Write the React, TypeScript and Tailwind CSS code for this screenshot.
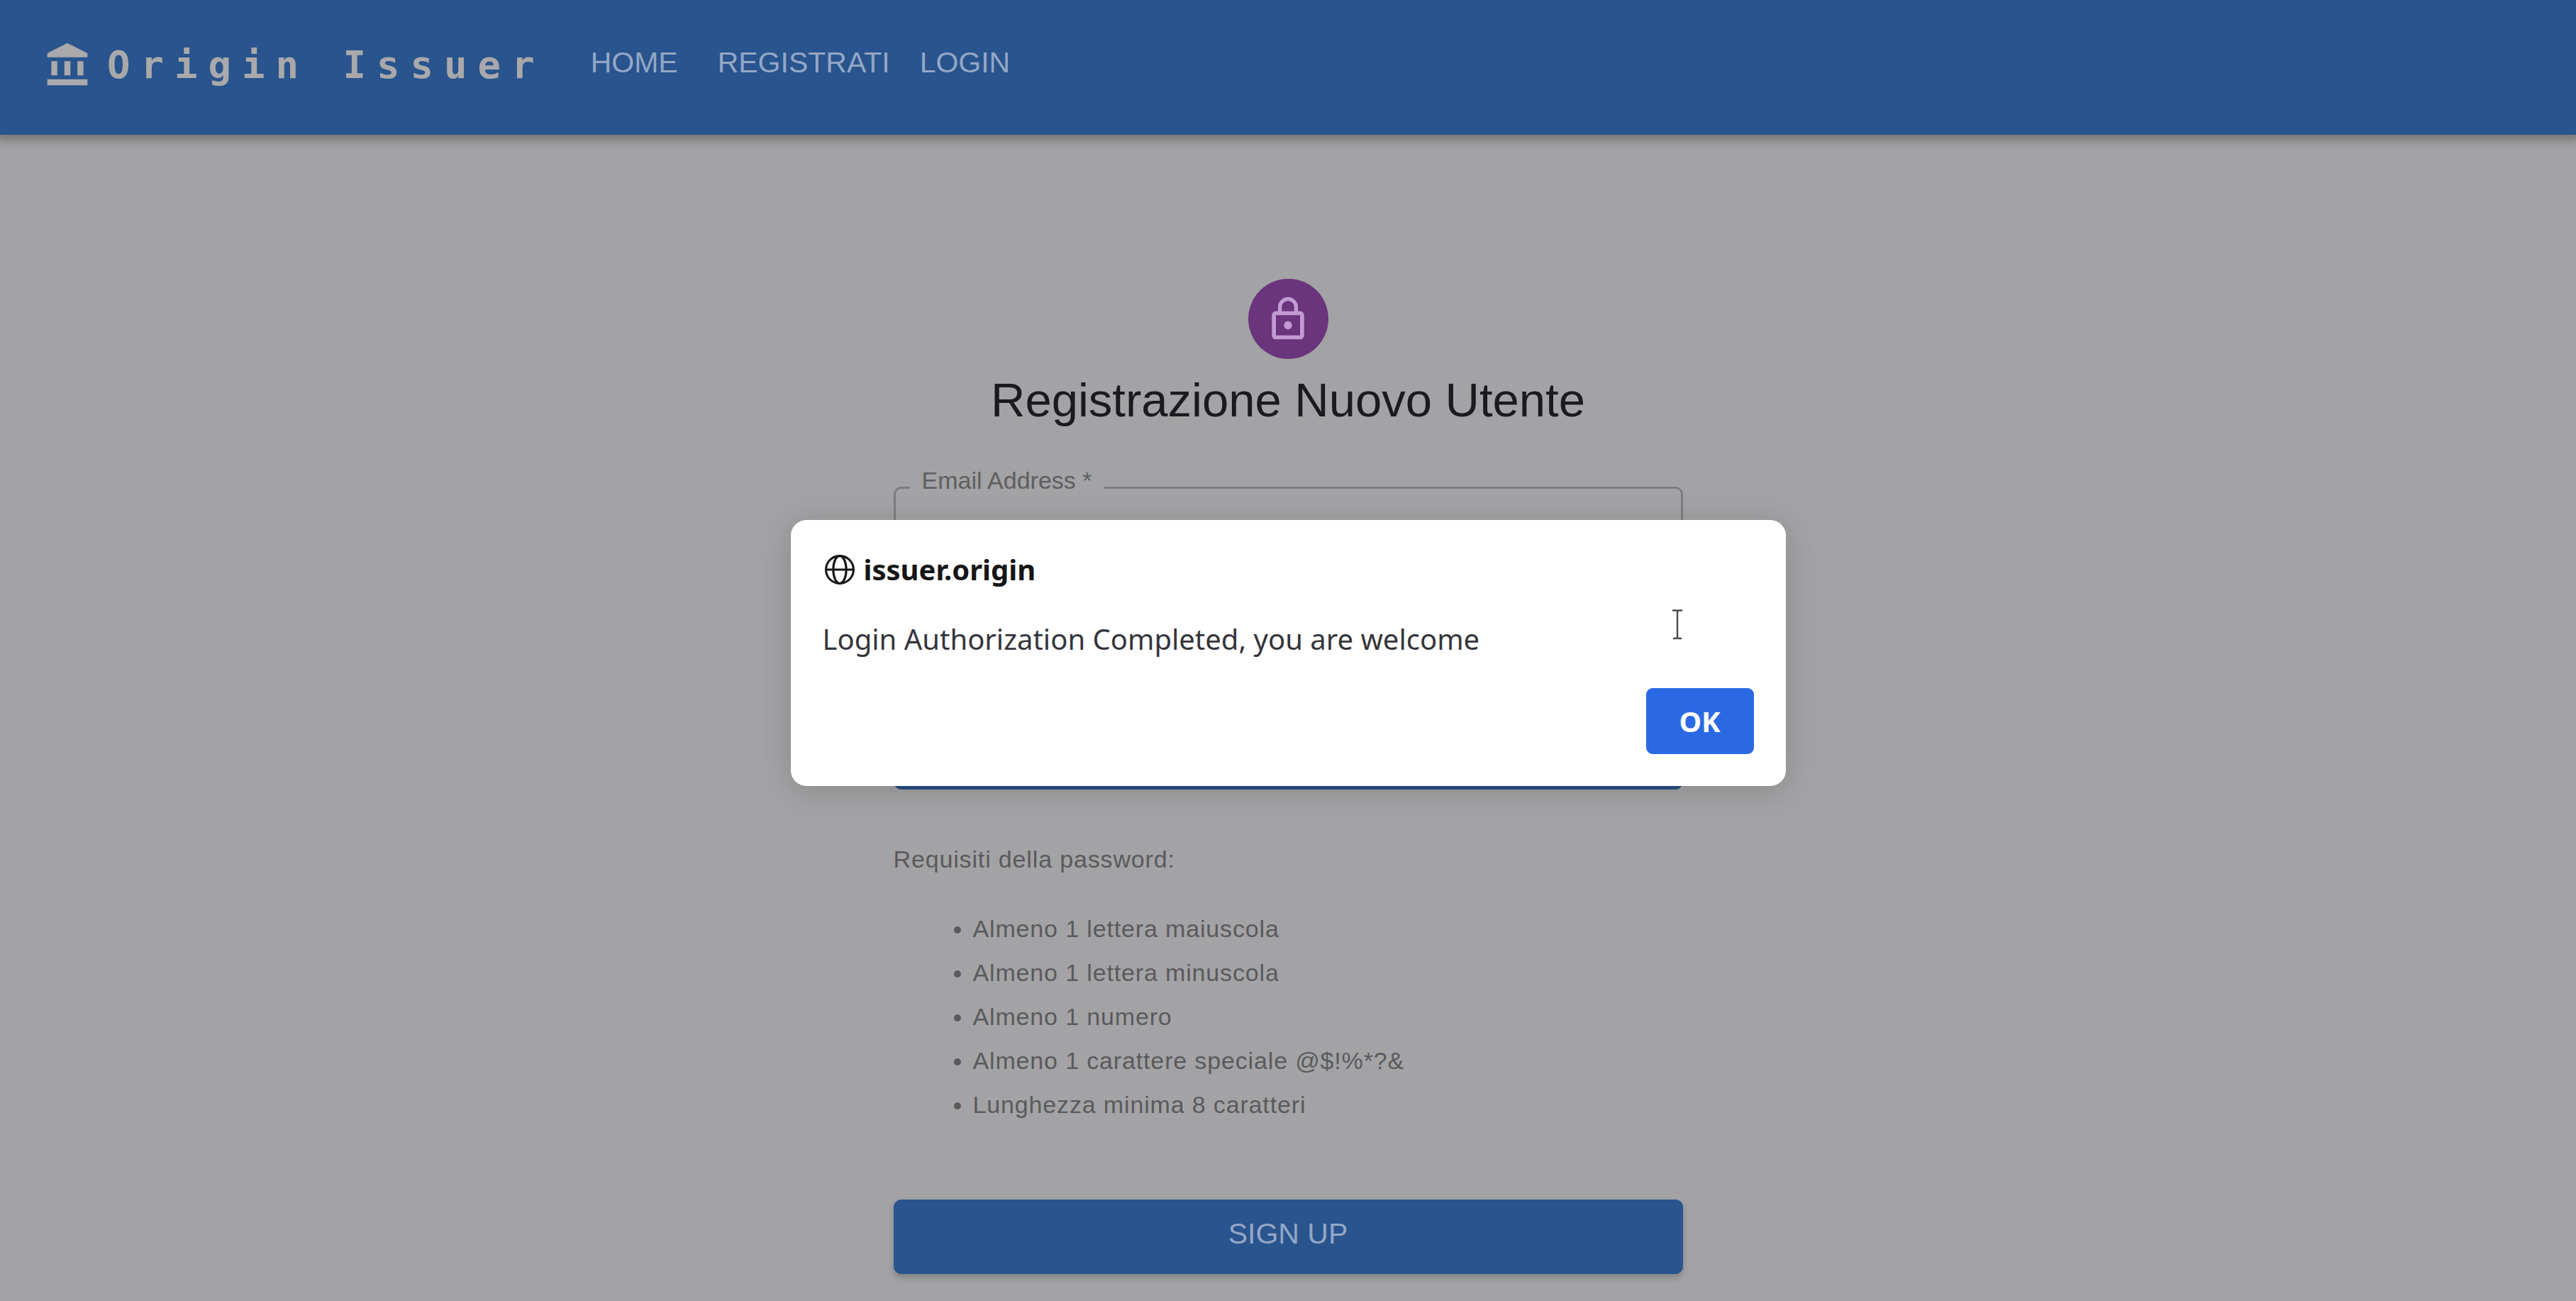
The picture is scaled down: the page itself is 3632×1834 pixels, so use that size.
import React from "react";
import { MdAccountBalance, MdLockOutline } from "react-icons/md";

const navLinks = [
  { label: "HOME", spacing: "mr-14" },
  { label: "REGISTRATI", spacing: "mr-[42px]" },
  { label: "LOGIN", spacing: "" },
];

const passwordRules = [
  "Almeno 1 lettera maiuscola",
  "Almeno 1 lettera minuscola",
  "Almeno 1 numero",
  "Almeno 1 carattere speciale @$!%*?&",
  "Lunghezza minima 8 caratteri",
];

function NavBar() {
  return (
    <header className="flex h-[190px] items-start bg-[#29548d] px-[61px] shadow-[0_4px_12px_4px_rgba(0,0,0,0.28)]">
      <a href="#" className="mt-[58px] flex items-center text-[#a9a9ab]">
        <MdAccountBalance className="size-[68px]" />
        <span className="ml-[22px] font-['DejaVu_Sans_Mono',monospace] text-[54px] leading-[68px] font-bold tracking-[15px]">
          Origin Issuer
        </span>
      </a>
      <nav className="mt-[57px] ml-16 flex text-[41px] leading-[62px] text-[#93a7c6]">
        {navLinks.map((link) => (
          <a key={link.label} href="#" className={link.spacing}>
            {link.label}
          </a>
        ))}
      </nav>
    </header>
  );
}

function RegistrationForm() {
  return (
    <form
      className="mx-auto mt-[203px] flex w-[1113px] max-w-full flex-col"
      onSubmit={(e) => e.preventDefault()}
    >
      <div className="flex size-[113px] items-center justify-center self-center rounded-full bg-[#6a357c] text-[#c29bd3]">
        <MdLockOutline className="size-[68px]" />
      </div>
      <h1 className="mt-3 text-center text-[67px] leading-[92px] text-[#1b1b1f]">
        Registrazione Nuovo Utente
      </h1>

      <fieldset className="mt-[47px] h-[188px] rounded-[11px] border-3 border-[#7e7e80] px-5">
        <legend className="px-[17px] pb-5 text-[34px] leading-[40px] text-[#5e5e60]">
          <label htmlFor="email">Email Address *</label>
        </legend>
        <input
          id="email"
          type="email"
          className="h-[100px] w-full bg-transparent text-[41px] outline-none"
        />
      </fieldset>

      <input
        type="password"
        aria-label="Password"
        className="mt-[111px] h-[157px] rounded-[11px] border-6 border-[#294f84] bg-transparent px-9 text-[41px] outline-none"
      />

      <div className="text-[34px] leading-[62px] tracking-wide text-[#5a5a5c]">
        <p className="mt-[67px]">Requisiti della password:</p>
        <ul className="mt-9 list-disc pl-28">
          {passwordRules.map((rule) => (
            <li key={rule}>{rule}</li>
          ))}
        </ul>
      </div>

      <button
        type="submit"
        className="mt-[103px] h-[105px] rounded-[11px] bg-[#29548d] pb-2 text-[41px] text-[#93a7c6] shadow-[0_5px_10px_rgba(0,0,0,0.2)]"
      >
        SIGN UP
      </button>
    </form>
  );
}

function GlobeIcon() {
  return (
    <svg viewBox="0 0 24 24" className="size-11" fill="none" stroke="currentColor" strokeWidth="1.7" aria-hidden="true">
      <circle cx="12" cy="12" r="10.6" />
      <ellipse cx="12" cy="12" rx="5" ry="10.6" />
      <path d="M1.4 12h21.2" />
    </svg>
  );
}

function TextCursor() {
  return (
    <svg
      viewBox="0 0 16 46"
      className="absolute top-[125px] right-[145px] h-[46px] w-4"
      fill="none"
      stroke="#4a4a4a"
      strokeWidth="2.4"
      aria-hidden="true"
    >
      <path d="M1 2.5h5q2 0 2 2q0-2 2-2h5M8 4v36M2 42h4q2 0 2-2q0 2 2 2h4" />
    </svg>
  );
}

function LoginAlert() {
  return (
    <div className="absolute inset-x-0 top-[733px] flex justify-center">
      <div
        role="alertdialog"
        aria-labelledby="alert-title"
        aria-describedby="alert-message"
        className="relative flex h-[375px] w-[1403px] flex-col rounded-[22px] bg-white px-[45px] pt-11 pb-[45px] font-['Noto_Sans',sans-serif] shadow-[0_6px_44px_rgba(0,0,0,0.16)]"
      >
        <h2 id="alert-title" className="flex items-center gap-3 pl-0.5 text-[40px] leading-[52px] font-bold text-[#161616]">
          <GlobeIcon />
          issuer.origin
        </h2>
        <p id="alert-message" className="mt-[46px] text-[40px] leading-[52px] text-[#35353b]">
          Login Authorization Completed, you are welcome
        </p>
        <button type="button" className="mt-auto h-[93px] w-[152px] self-end rounded-[9px] bg-[#2b69e4] text-[40px] font-bold text-white">
          OK
        </button>
        <TextCursor />
      </div>
    </div>
  );
}

export default function App() {
  return (
    <div className="relative h-screen overflow-hidden bg-[#a3a3a5] font-['Liberation_Sans',Arial,sans-serif]">
      <NavBar />
      <RegistrationForm />
      <LoginAlert />
    </div>
  );
}
